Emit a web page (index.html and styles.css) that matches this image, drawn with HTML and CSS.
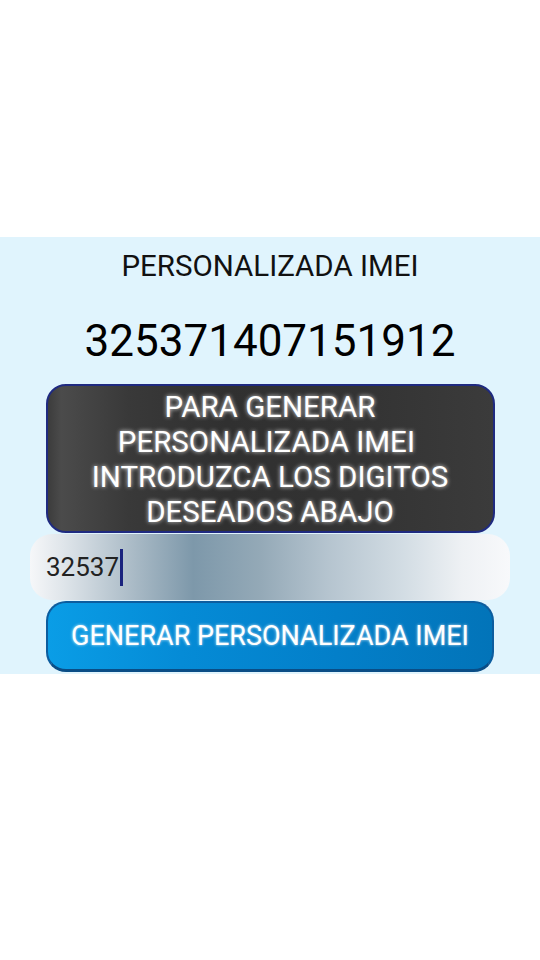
FILE: index.html
```html
<!DOCTYPE html>
<html lang="es">
<head>
<meta charset="utf-8">
<title>Personalizada IMEI</title>
<link rel="stylesheet" href="styles.css">
</head>
<body>
<div class="screen">
  <section class="panel">
    <h1 class="title">PERSONALIZADA IMEI</h1>
    <div class="imei">325371407151912</div>
    <div class="notice">PARA GENERAR<br>PERSONALIZADA IMEI&nbsp;<br>INTRODUZCA LOS DIGITOS<br>DESEADOS ABAJO</div>
    <div class="field" role="textbox"><span class="value">32537</span><span class="caret"></span></div>
    <button class="generate" type="button">GENERAR PERSONALIZADA IMEI</button>
  </section>
</div>
</body>
</html>
```
FILE: styles.css
```css
html, body {
  margin: 0;
  padding: 0;
  background: #ffffff;
}
body {
  font-family: Roboto, "Noto Sans", "DejaVu Sans", sans-serif;
  width: 540px;
  height: 960px;
  overflow: hidden;
}
.screen {
  padding-top: 237px;
}
.panel {
  background: #e0f4fd;
  display: flex;
  flex-direction: column;
  align-items: center;
  padding: 12px 0 2px;
  height: 437px;
  box-sizing: border-box;
}
.title {
  margin: 0;
  font-weight: 400;
  font-size: 29.5px;
  line-height: 34px;
  color: #111;
}
.imei {
  margin-top: 34px;
  font-size: 44px;
  line-height: 48px;
  color: #000;
}
.notice {
  margin-top: 19px;
  width: 449px;
  height: 149px;
  box-sizing: border-box;
  border: 2px solid #1f2a80;
  border-radius: 20px;
  background: linear-gradient(to right, #3c3c3c 0%, #4b4b4b 3%, #454545 8%, #393939 18%, #303030 40%, #333333 70%, #3b3b3b 100%);
  color: #ffffff;
  text-align: center;
  font-size: 29.5px;
  line-height: 35px;
  padding-top: 4px;
  text-shadow: 0 0 4px rgba(255,255,255,0.85);
}
.field {
  margin-top: 1px;
  width: 480px;
  height: 66px;
  box-sizing: border-box;
  border-radius: 22px;
  background: linear-gradient(to right, #f6f7f9 0%, #dfe5ea 7%, #a8b9c5 22%, #7d98aa 34%, #94a9b7 48%, #b5c4cf 62%, #d3dde4 78%, #eef1f4 90%, #f8f9fb 100%);
  display: flex;
  align-items: center;
  padding-left: 16px;
  font-size: 26px;
  color: #222;
}
.caret {
  display: inline-block;
  width: 3px;
  height: 37px;
  background: #1a237e;
  margin-left: 1px;
}
.generate {
  margin-top: 1px;
  width: 448px;
  height: 71px;
  box-sizing: border-box;
  border: 2px solid #0c5d9f;
  border-bottom: 3px solid #0a4d86;
  border-radius: 20px;
  background: linear-gradient(to right, #0a9de6 0%, #058bd6 30%, #037fc9 65%, #0274b9 100%);
  color: #ffffff;
  font-family: Roboto, "Noto Sans", sans-serif;
  font-size: 27px;
  padding: 0;
  text-shadow: 0 0 3px rgba(255,255,255,0.8);
}
```
